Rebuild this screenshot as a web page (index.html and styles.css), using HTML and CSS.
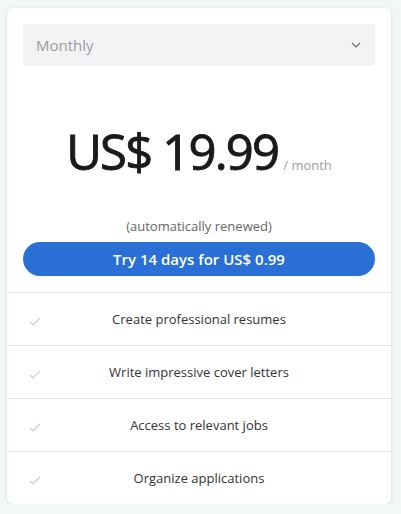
FILE: index.html
```html
<!DOCTYPE html>
<html>
<head>
<meta charset="utf-8">
<link rel="stylesheet" href="styles.css">
</head>
<body>
<div class="card">
  <div class="top">
    <div class="select">
      <span>Monthly</span>
      <svg class="chev" width="10" height="6" viewBox="0 0 10 6"><path d="M1 1 L5 5 L9 1" fill="none" stroke="#666" stroke-width="1.2"/></svg>
    </div>
    <div class="price">
      <span class="amount">US$ 19.99</span>
      <span class="per">/ month</span>
    </div>
    <div class="renew">(automatically renewed)</div>
    <button class="cta">Try 14 days for US$ 0.99</button>
  </div>
  <ul class="features">
    <li><svg class="check" width="12" height="9" viewBox="0 0 12 9"><path d="M1 5 L4 8 L11 1" fill="none" stroke="#ccc" stroke-width="1.2"/></svg><span>Create professional resumes</span></li>
    <li><svg class="check" width="12" height="9" viewBox="0 0 12 9"><path d="M1 5 L4 8 L11 1" fill="none" stroke="#ccc" stroke-width="1.2"/></svg><span>Write impressive cover letters</span></li>
    <li><svg class="check" width="12" height="9" viewBox="0 0 12 9"><path d="M1 5 L4 8 L11 1" fill="none" stroke="#ccc" stroke-width="1.2"/></svg><span>Access to relevant jobs</span></li>
    <li><svg class="check" width="12" height="9" viewBox="0 0 12 9"><path d="M1 5 L4 8 L11 1" fill="none" stroke="#ccc" stroke-width="1.2"/></svg><span>Organize applications</span></li>
  </ul>
</div>
</body>
</html>
```
FILE: styles.css
```css
html, body { margin: 0; padding: 0; }
body {
  background: #f4f7f8;
  font-family: "Open Sans", "Noto Sans", sans-serif;
  padding: 8px 10px 0 7px;
}
.card {
  width: 384px;
  background: #fff;
  border-radius: 6px;
  box-shadow: 0 1px 4px rgba(0,0,0,0.12);
  overflow: hidden;
}
.top {
  padding: 16px 16px 16px 16px;
}
.select {
  height: 42px;
  background: #f3f3f5;
  border-radius: 4px;
  display: flex;
  align-items: center;
  justify-content: space-between;
  padding: 0 12px 0 13px;
  color: #9a9a9e;
  font-size: 15px;
}
.chev { margin-right: 2px; }
.price {
  display: flex;
  justify-content: center;
  align-items: baseline;
  margin-top: 56px;
  padding-left: 0;
}
.amount {
  font-size: 49px;
  color: #1a1a1a;
  line-height: 58px;
  letter-spacing: -1.8px;
  -webkit-text-stroke: 0.9px #1a1a1a;
}
.per {
  font-size: 13px;
  color: #a0a0a0;
  margin-left: 5px;
}
.renew {
  text-align: center;
  font-size: 13px;
  color: #666;
  margin-top: 37px;
  line-height: 18px;
}
.cta {
  display: block;
  width: 100%;
  height: 34px;
  margin-top: 7px;
  border: none;
  border-radius: 17px;
  background: #2a6fd6;
  color: #fff;
  font-family: inherit;
  font-size: 15px;
  font-weight: 600;
}
.features {
  list-style: none;
  margin: 0;
  padding: 0;
}
.features li {
  height: 52px;
  border-top: 1px solid #e3e3e3;
  display: flex;
  align-items: center;
  position: relative;
  justify-content: center;
  font-size: 13px;
  color: #333;
}
.check {
  position: absolute;
  left: 22px;
  top: 24px;
}
```
